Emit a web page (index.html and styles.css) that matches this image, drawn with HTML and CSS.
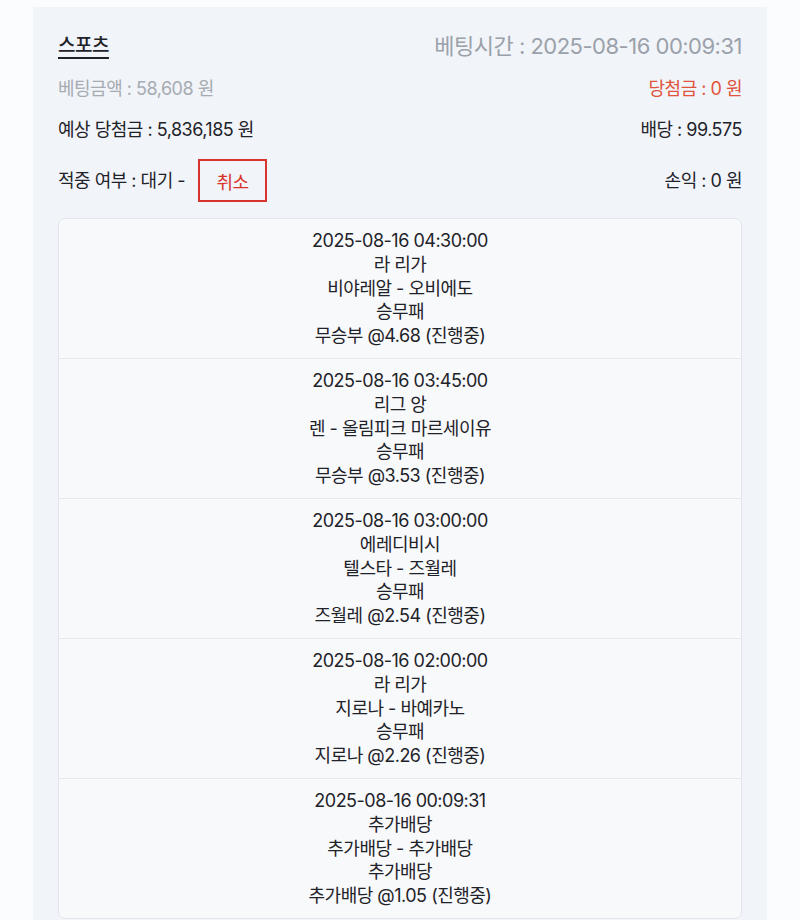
FILE: index.html
```html
<!DOCTYPE html>
<html>
<head>
	<title>베팅내역</title>
	<link rel="stylesheet" href="styles.css">
</head>
<body>
	<div class="bet-card">
		<div class="bet-row">
			<span class="bet-type">스포츠</span>
			<span class="bet-time">베팅시간 : 2025-08-16 00:09:31</span>
		</div>
		<div class="bet-row">
			<span class="muted">베팅금액 : 58,608 원</span>
			<span class="win">당첨금 : 0 원</span>
		</div>
		<div class="bet-row">
			<span>예상 당첨금 : 5,836,185 원</span>
			<span>배당 : 99.575</span>
		</div>
		<div class="bet-row result-row">
			<div class="result">
				<span>적중 여부 : 대기 -</span>
				<button class="cancel-btn">취소</button>
			</div>
			<span>손익 : 0 원</span>
		</div>

		<ul class="game-list">
			<li>
				<p>2025-08-16 04:30:00</p>
				<p>라 리가</p>
				<p>비야레알 - 오비에도</p>
				<p>승무패</p>
				<p>무승부 @4.68 (진행중)</p>
			</li>
			<li>
				<p>2025-08-16 03:45:00</p>
				<p>리그 앙</p>
				<p>렌 - 올림피크 마르세이유</p>
				<p>승무패</p>
				<p>무승부 @3.53 (진행중)</p>
			</li>
			<li>
				<p>2025-08-16 03:00:00</p>
				<p>에레디비시</p>
				<p>텔스타 - 즈월레</p>
				<p>승무패</p>
				<p>즈월레 @2.54 (진행중)</p>
			</li>
			<li>
				<p>2025-08-16 02:00:00</p>
				<p>라 리가</p>
				<p>지로나 - 바예카노</p>
				<p>승무패</p>
				<p>지로나 @2.26 (진행중)</p>
			</li>
			<li>
				<p>2025-08-16 00:09:31</p>
				<p>추가배당</p>
				<p>추가배당 - 추가배당</p>
				<p>추가배당</p>
				<p>추가배당 @1.05 (진행중)</p>
			</li>
		</ul>
	</div>
</body>
</html>
```

FILE: styles.css
```css
* {
	margin: 0;
	padding: 0;
	box-sizing: border-box;
}

body {
	background-color: #fbfcfd;
	font-family: Inter, "Noto Sans CJK KR", sans-serif;
	color: #1f2329;
	letter-spacing: -0.5px;
	padding: 7px 33px 0;
}

.bet-card {
	background-color: #f1f4f9;
	padding: 27px 25px 20px;
	font-size: 18px;
}

.bet-row {
	display: flex;
	justify-content: space-between;
	align-items: center;
	margin-bottom: 17px;
	line-height: 24px;
}

.bet-row:nth-child(2) {
	margin-top: 19px;
}

.bet-type {
	font-size: 19px;
	font-weight: 500;
	text-decoration: underline;
	text-underline-offset: 5px;
	text-decoration-thickness: 1.5px;
}

.bet-time {
	font-size: 22px;
	color: #9ba1aa;
	letter-spacing: -0.5px;
}

.muted {
	color: #a6abb2;
}

.win {
	color: #e0533d;
}

.result-row {
	margin-bottom: 16px;
}

.result {
	display: flex;
	align-items: center;
	gap: 13px;
}

.cancel-btn {
	appearance: none;
	background-color: transparent;
	border: 2px solid #d9342b;
	border-radius: 0;
	color: #d9342b;
	font-family: inherit;
	font-size: 18px;
	letter-spacing: -0.5px;
	width: 69px;
	height: 43px;
	cursor: pointer;
}

.game-list {
	list-style: none;
	background-color: #f8f9fb;
	border: 1px solid #e3e7ec;
	border-radius: 7px;
}

.game-list li {
	text-align: center;
	padding: 10px 0;
	line-height: 23.8px;
	border-bottom: 1px solid #e6e9ee;
}

.game-list li:last-child {
	border-bottom: none;
}
```
